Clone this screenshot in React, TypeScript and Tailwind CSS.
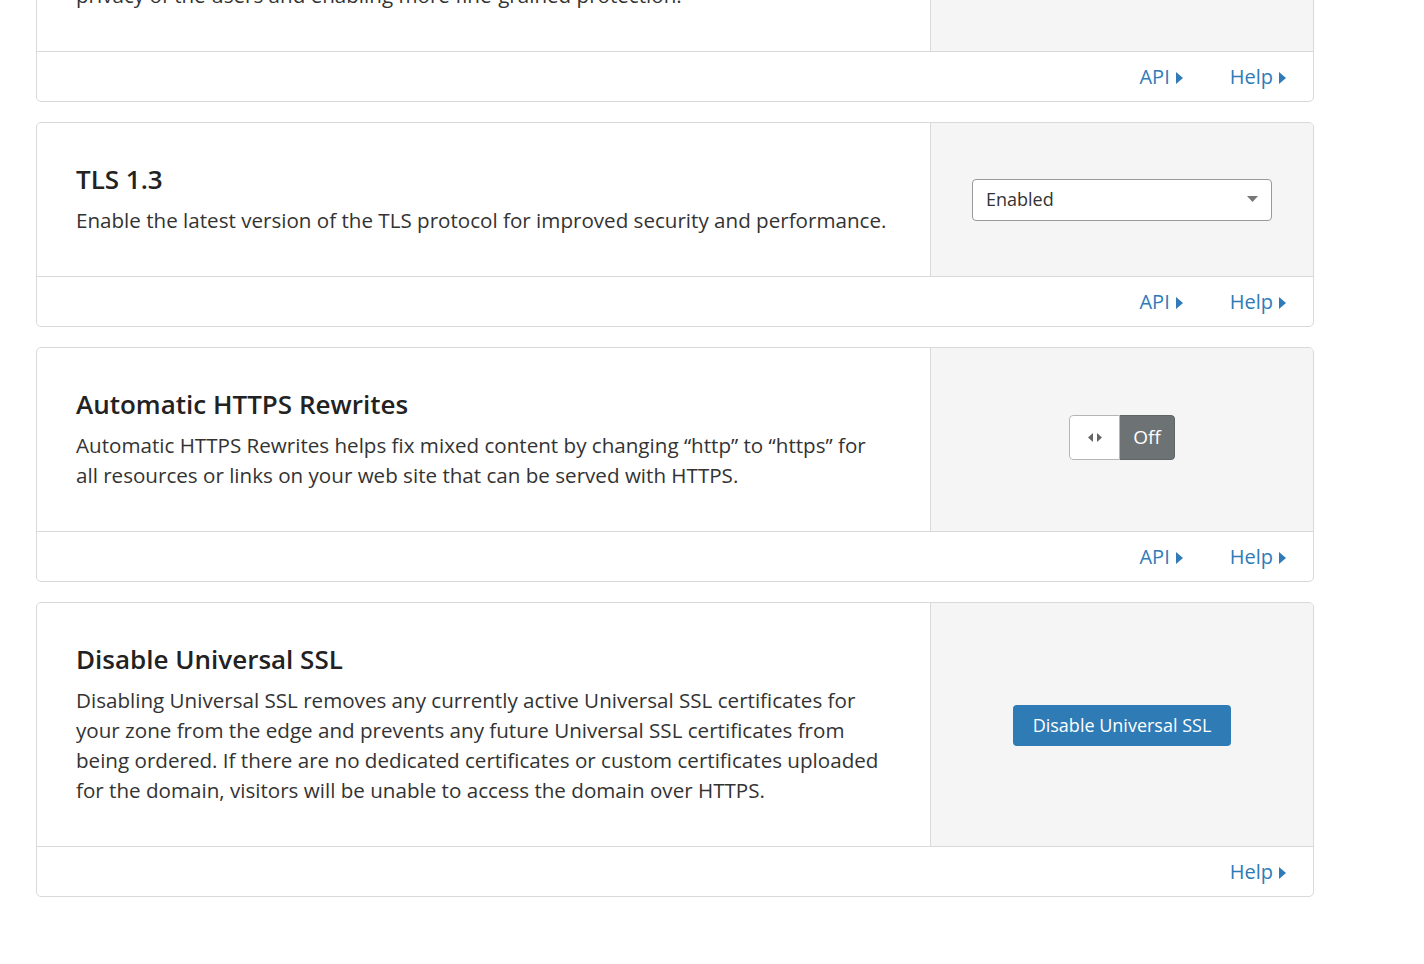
import React from "react";

const font = "font-['Open_Sans','Noto_Sans',sans-serif]";

function Caret() {
  return (
    <svg width="7" height="12" viewBox="0 0 7 12" className="ml-[6px] mt-[2px]">
      <path d="M0 0 L7 6 L0 12 Z" fill="currentColor" />
    </svg>
  );
}

function FooterLinks({ api = true }: { api?: boolean }) {
  return (
    <div className="h-[50px] border-t border-[#d9d9d9] flex items-center justify-end gap-[47px] pr-[27px]">
      {api && (
        <a href="#" className="flex items-center text-[20px] text-[#2f7bb8]">
          API
          <Caret />
        </a>
      )}
      <a href="#" className="flex items-center text-[20px] text-[#2f7bb8]">
        Help
        <Caret />
      </a>
    </div>
  );
}

function SettingCard({
  title,
  children,
  control,
  api = true,
}: {
  title: string;
  children: React.ReactNode;
  control: React.ReactNode;
  api?: boolean;
}) {
  return (
    <div className="rounded-[5px] border border-[#d9d9d9] bg-white overflow-hidden">
      <div className="flex">
        <div className="w-[893px] px-[39px] pt-10 pb-[41px]">
          <h3 className="text-[26px] leading-[32px] font-semibold text-[#222]">{title}</h3>
          <p className="mt-[10px] text-[20.6px] leading-[30px] text-[#333]">{children}</p>
        </div>
        <div className="flex-1 bg-[#f5f5f5] border-l border-[#d9d9d9] flex items-center justify-center">
          {control}
        </div>
      </div>
      <FooterLinks api={api} />
    </div>
  );
}

export default function App() {
  return (
    <div className={`min-h-screen bg-white overflow-hidden ${font}`}>
      <div className="w-[1278px] ml-[36px] flex flex-col gap-5 -mt-[133px] pb-16">
        <SettingCard title="Encrypted SNI" control={null}>
          Encrypt the Server Name Indication (SNI) sent by TLS clients, improving the
          <br />
          privacy of the users and enabling more fine-grained protection.
        </SettingCard>

        <SettingCard
          title="TLS 1.3"
          control={
            <div className="relative w-[300px]">
              <select
                defaultValue="on"
                className="w-full h-[42px] appearance-none rounded-[4px] border border-[#999] bg-white pl-[13px] text-[18px] text-[#333] outline-none"
              >
                <option value="on">Enabled</option>
                <option value="off">Disabled</option>
              </select>
              <svg width="11" height="6" viewBox="0 0 11 6" className="absolute right-[14px] top-[17px] pointer-events-none">
                <path d="M0 0 L11 0 L5.5 6 Z" fill="#777" />
              </svg>
            </div>
          }
        >
          Enable the latest version of the TLS protocol for improved security and performance.
        </SettingCard>

        <SettingCard
          title="Automatic HTTPS Rewrites"
          control={
            <div className="flex h-[45px] -mt-[5px] rounded-[4px] overflow-hidden">
              <div className="w-[51px] flex items-center justify-center bg-white border border-[#b5b5b5] rounded-l-[4px] gap-[4px]">
                <svg width="5" height="9" viewBox="0 0 5 9">
                  <path d="M5 0 L0 4.5 L5 9 Z" fill="#666" />
                </svg>
                <svg width="5" height="9" viewBox="0 0 5 9">
                  <path d="M0 0 L5 4.5 L0 9 Z" fill="#666" />
                </svg>
              </div>
              <div className="w-[55px] flex items-center justify-center bg-[#6d7275] border border-[#5f6466] border-l-0 rounded-r-[4px] text-white text-[19px]">
                Off
              </div>
            </div>
          }
        >
          Automatic HTTPS Rewrites helps fix mixed content by changing “http” to “https” for
          <br />
          all resources or links on your web site that can be served with HTTPS.
        </SettingCard>

        <SettingCard
          title="Disable Universal SSL"
          api={false}
          control={
            <button className="h-[41px] px-5 rounded-[4px] bg-[#2f7bb6] text-white text-[18px] mt-[1px]">
              Disable Universal SSL
            </button>
          }
        >
          Disabling Universal SSL removes any currently active Universal SSL certificates for
          <br />
          your zone from the edge and prevents any future Universal SSL certificates from
          <br />
          being ordered. If there are no dedicated certificates or custom certificates uploaded
          <br />
          for the domain, visitors will be unable to access the domain over HTTPS.
        </SettingCard>
      </div>
    </div>
  );
}
